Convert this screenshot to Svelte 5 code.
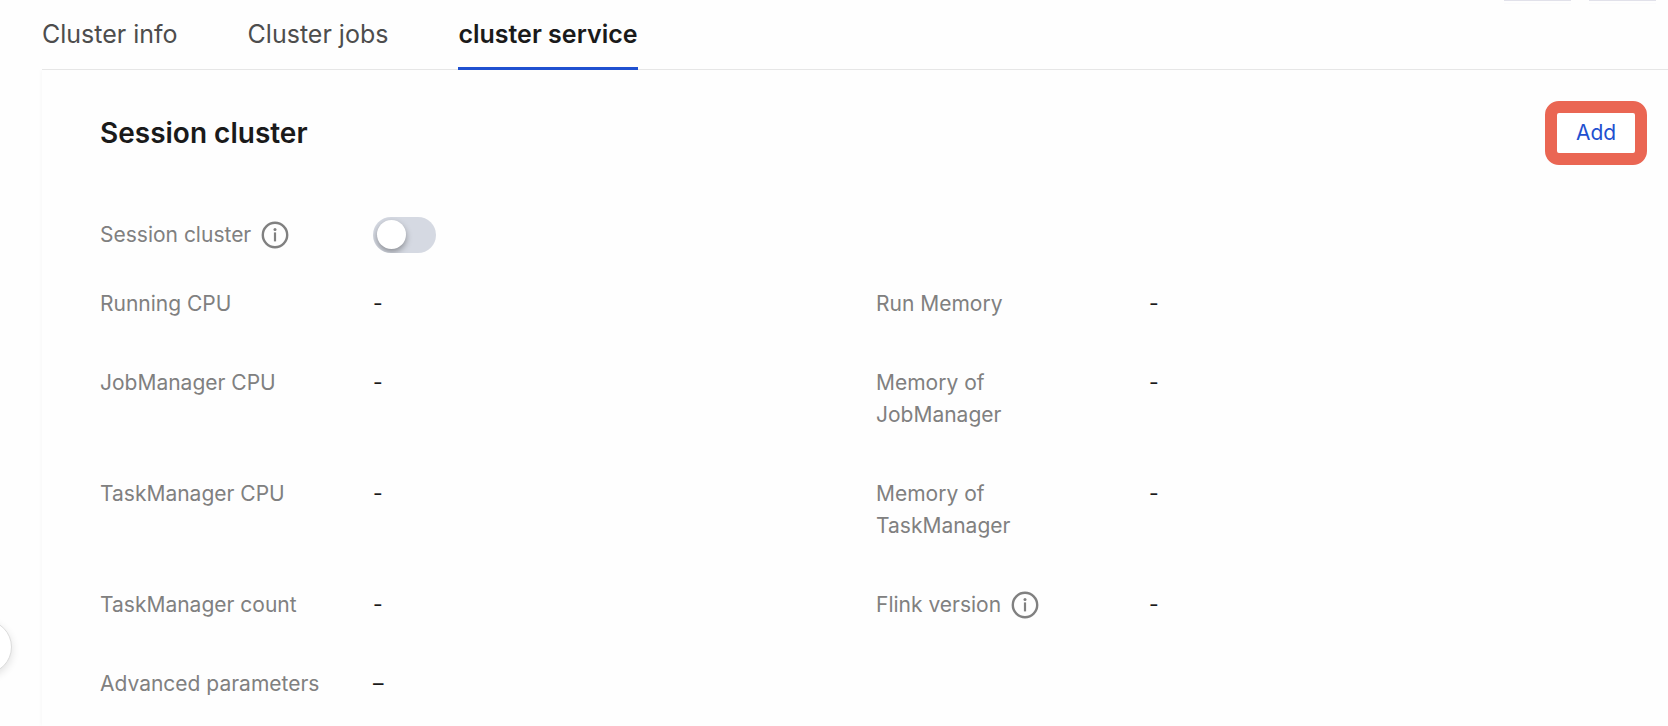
<script lang="ts">
	interface Field {
		label: string;
		value: string;
		info?: boolean;
	}

	const tabs = ['Cluster info', 'Cluster jobs', 'cluster service'];

	const rows: Field[][] = [
		[
			{ label: 'Running CPU', value: '-' },
			{ label: 'Run Memory', value: '-' }
		],
		[
			{ label: 'JobManager CPU', value: '-' },
			{ label: 'Memory of JobManager', value: '-' }
		],
		[
			{ label: 'TaskManager CPU', value: '-' },
			{ label: 'Memory of TaskManager', value: '-' }
		],
		[
			{ label: 'TaskManager count', value: '-' },
			{ label: 'Flink version', value: '-', info: true }
		],
		[{ label: 'Advanced parameters', value: '–' }]
	];

	let active = $state('cluster service');
	let sessionEnabled = $state(false);
</script>

{#snippet infoIcon()}
	<svg class="info-icon" viewBox="0 0 28 28" aria-hidden="true">
		<circle cx="14" cy="14" r="12.2" fill="none" stroke="currentColor" stroke-width="2.4" />
		<circle cx="14" cy="8.6" r="1.5" fill="currentColor" />
		<path d="M14 11.4v9" stroke="currentColor" stroke-width="2.2" />
	</svg>
{/snippet}

<main class="page">
	<div class="top-actions" aria-hidden="true">
		<span></span>
		<span></span>
	</div>

	<nav class="tabs">
		{#each tabs as tab}
			<button class="tab" class:active={tab === active} onclick={() => (active = tab)}>{tab}</button>
		{/each}
	</nav>

	<section class="card">
		<header class="card-header">
			<h2>Session cluster</h2>
			<button class="add">Add</button>
		</header>

		<div class="switch-row">
			<label class="label" for="session-switch">Session cluster {@render infoIcon()}</label>
			<input id="session-switch" class="switch" type="checkbox" role="switch" bind:checked={sessionEnabled} />
		</div>

		<dl class="fields">
			{#each rows as row}
				<div class="row">
					{#each row as field}
						<div class="field">
							<dt class="label">
								{field.label}
								{#if field.info}{@render infoIcon()}{/if}
							</dt>
							<dd>{field.value}</dd>
						</div>
					{/each}
				</div>
			{/each}
		</dl>
	</section>

	<div class="collapse-handle" aria-hidden="true"></div>
</main>

<style>
	:global(body) {
		background: #fefefe;
	}

	.page {
		position: relative;
		box-sizing: border-box;
		display: flex;
		flex-direction: column;
		min-height: 100vh;
		padding-left: 42px;
		overflow: hidden;
		color: #1a1a1a;
		font-family: Inter, 'Liberation Sans', sans-serif;
		font-size: 21px;
		line-height: 32px;
	}

	button {
		padding: 0;
		border: 0;
		background: none;
		font: inherit;
		cursor: pointer;
	}

	.top-actions {
		position: absolute;
		top: 0;
		right: 12px;
		display: flex;
		gap: 18px;
	}

	.top-actions span {
		width: 67px;
		height: 1px;
		background: #e1e1ea;
		box-shadow: 0 3px 0 #fbfbfd;
	}

	.tabs {
		display: flex;
		gap: 70px;
		height: 69px;
		border-bottom: 1px solid #e6e6e6;
	}

	.tab {
		height: 70px;
		border-bottom: 3px solid transparent;
		color: #4d4d4d;
		font-size: 25px;
	}

	.tab.active {
		border-color: #1f50d0;
		color: #1a1a1a;
		font-weight: 600;
	}

	.card {
		flex: 1;
		padding: 31px 16px 22px 58px;
		box-shadow: -1px 0 4px rgba(0, 0, 0, 0.03);
		clip-path: inset(0 0 0 -6px);
	}

	.card-header {
		display: flex;
		align-items: center;
		justify-content: space-between;
		margin-bottom: 52px;
		padding-right: 5px;
	}

	h2 {
		margin: 0;
		font-size: 28px;
		font-weight: 600;
	}

	.add {
		box-sizing: border-box;
		width: 102px;
		height: 64px;
		border: 12px solid #ea6653;
		border-radius: 14px;
		background: #fff;
		color: #1f50d0;
	}

	.switch-row {
		display: flex;
		align-items: center;
		margin-bottom: 35px;
	}

	.label {
		box-sizing: border-box;
		flex: none;
		display: flex;
		align-items: center;
		gap: 10px;
		width: 273px;
		padding-right: 46px;
		color: #808080;
	}

	.info-icon {
		flex: none;
		width: 28px;
		height: 28px;
	}

	.switch {
		appearance: none;
		width: 63px;
		height: 36px;
		margin: 0;
		padding: 3px 4px;
		border-radius: 18px;
		background: #d5d9e2;
		overflow: hidden;
		cursor: pointer;
	}

	.switch::before {
		content: '';
		display: block;
		width: 29px;
		height: 29px;
		border-radius: 50%;
		background: #fff;
		box-shadow: 0 3px 6px rgba(0, 0, 0, 0.35);
	}

	.switch:checked {
		background: #1f50d0;
	}

	.switch:checked::before {
		margin-left: 26px;
	}

	.fields {
		display: flex;
		flex-direction: column;
		gap: 47px;
		margin: 0;
	}

	.row {
		display: grid;
		grid-template-columns: 1fr 1fr;
	}

	.field {
		display: flex;
		align-items: flex-start;
	}

	dd {
		margin: 0;
	}

	.collapse-handle {
		position: absolute;
		bottom: 52px;
		left: -42px;
		box-sizing: border-box;
		width: 54px;
		height: 54px;
		border: 1px solid #dcdcdc;
		border-radius: 50%;
		background: #fff;
		box-shadow: 0 3px 8px rgba(0, 0, 0, 0.12);
	}
</style>
